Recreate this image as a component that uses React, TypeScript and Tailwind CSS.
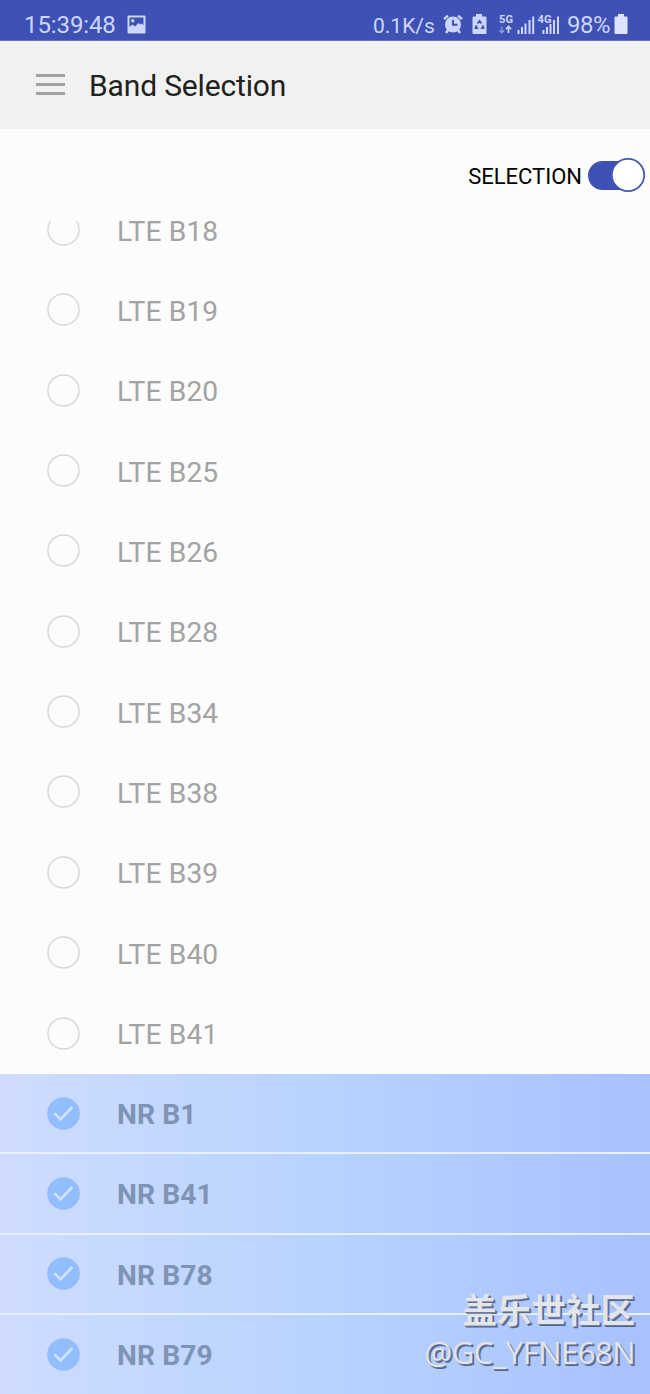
import React from 'react';

type Band = { name: string; checked?: boolean };

const bands: Band[] = [
  { name: 'LTE B18' },
  { name: 'LTE B19' },
  { name: 'LTE B20' },
  { name: 'LTE B25' },
  { name: 'LTE B26' },
  { name: 'LTE B28' },
  { name: 'LTE B34' },
  { name: 'LTE B38' },
  { name: 'LTE B39' },
  { name: 'LTE B40' },
  { name: 'LTE B41' },
  { name: 'NR B1', checked: true },
  { name: 'NR B41', checked: true },
  { name: 'NR B78', checked: true },
  { name: 'NR B79', checked: true },
];

function PictureIcon() {
  return (
    <svg className="ml-[11px] mt-[15px] h-[19px] w-[19px]" viewBox="0 0 19 19">
      <path
        fillRule="evenodd"
        fill="#ccd6ff"
        d="M1.5 0.5h16a1 1 0 0 1 1 1v16a1 1 0 0 1-1 1h-16a1 1 0 0 1-1-1v-16a1 1 0 0 1 1-1zM2.500 2.500v9.500l3-2.500 2.500 2 3.500-3.500 2 1.500 1.500-1 1.500 2V2.500z"
      />
      <circle cx="5.800" cy="5.800" r="1.700" fill="#ccd6ff" />
    </svg>
  );
}

function AlarmIcon() {
  return (
    <svg className="ml-2 mt-[14px] h-5 w-5" viewBox="0 0 20 20" fill="none" stroke="#ccd6ff">
      <path d="M1 5.200 5 1.600M19 5.200 15 1.600" strokeWidth="2.400" />
      <path d="M5 16l-2 3M15 16l2 3" strokeWidth="2.400" />
      <circle cx="10" cy="10.500" r="8" fill="#ccd6ff" stroke="none" />
      <path d="M10 5.800v5h4.500" stroke="#3f51b5" strokeWidth="1.900" />
    </svg>
  );
}

function BatterySaverIcon() {
  return (
    <svg className="ml-[9px] mt-[14px] h-5 w-[15px]" viewBox="0 0 15 20">
      <path d="M4 0h6v2.500h3.500a1 1 0 0 1 1 1V19a1 1 0 0 1-1 1h-12a1 1 0 0 1-1-1V3.500a1 1 0 0 1 1-1H4z" fill="#ccd6ff" />
      <path
        d="M5.500 9.500 7.500 6.900l2 2.600M10.500 11.200l1 3H9M6.300 14.200H3.500l1-3"
        fill="none"
        stroke="#3f51b5"
        strokeWidth="1.700"
      />
    </svg>
  );
}

function SignalIcons() {
  return (
    <svg className="ml-3 mt-[14px] h-5 w-[62px]" viewBox="0 0 62 20" fill="#ccd6ff">
      <text x="0" y="9" fontSize="11" fontWeight="700" textLength="14" lengthAdjust="spacingAndGlyphs" fontFamily="Roboto">
        5G
      </text>
      <path d="M2.800 12.500v6M0.500 16.200l2.300 2.500 2.300-2.500" stroke="#8e9ce0" strokeWidth="1.300" fill="none" />
      <path d="M9.500 19v-6M6.900 15.200l2.600-2.700 2.600 2.700" stroke="#ccd6ff" strokeWidth="1.700" fill="none" />
      <path d="M18.500 16h2v4h-2zM22 13h2v7h-2zM25.500 9.500h2V20h-2zM29.500 6h2v14h-2zM33.200 2.500h2V20h-2z" />
      <text x="38.500" y="9" fontSize="11" fontWeight="700" textLength="14" lengthAdjust="spacingAndGlyphs" fontFamily="Roboto">
        4G
      </text>
      <path d="M43.500 16h2v4h-2zM47 13h2v7h-2zM50.500 10h2v10h-2zM54 6h2v14h-2zM58 2.500h2V20h-2z" />
    </svg>
  );
}

function StatusBar() {
  return (
    <div className="flex h-[41px] shrink-0 items-start border-b border-[#6470b8] bg-[#3f51b5] pl-6 text-[#ccd6ff]">
      <span className="mt-[11px] w-[92px] whitespace-nowrap text-[24px] leading-[29px] tracking-[-0.1px]">15:39:48</span>
      <PictureIcon />
      <span className="ml-auto mt-3 w-[62px] whitespace-nowrap text-[21px] leading-7">0.1K/s</span>
      <AlarmIcon />
      <BatterySaverIcon />
      <SignalIcons />
      <span className="ml-[6px] mt-[11px] w-[45px] whitespace-nowrap text-[24px] leading-[29px] tracking-[-0.5px]">98%</span>
      <svg className="ml-[2px] mr-[22px] mt-[14px] h-5 w-[14px]" viewBox="0 0 14 20">
        <path d="M4 0h6v2.500h2.500a1 1 0 0 1 1 1V19a1 1 0 0 1-1 1h-11a1 1 0 0 1-1-1V3.500a1 1 0 0 1 1-1H4z" fill="#dce2ff" />
      </svg>
    </div>
  );
}

function BandRow({ band }: { band: Band }) {
  if (band.checked) {
    return (
      <li className="flex h-[80.36px] items-center border-b-2 border-[#e6f0ff] bg-linear-to-r from-[#cfdcff] via-[#b8d3ff] to-[#a8c1ff] pl-[46.5px] last:h-[90px] last:pb-[10px]">
        <svg className="h-[33px] w-[33px]" viewBox="0 0 33 33">
          <circle cx="16.500" cy="16.500" r="16.300" fill="#92beff" />
          <path d="M7.500 16.300l6 6L25.500 9.800" fill="none" stroke="#d2e4ff" strokeWidth="2.600" />
        </svg>
        <span className="ml-[37.5px] mt-[4px] text-[28.2px] font-bold tracking-[0.08px] text-[#7f93b4]">{band.name}</span>
      </li>
    );
  }

  return (
    <li className="flex h-[80.36px] items-center pl-[46.5px]">
      <svg className="mb-[1.5px] h-[33px] w-[33px]" viewBox="0 0 33 33">
        <circle cx="16.500" cy="16.500" r="15.600" fill="none" stroke="#d8d8d8" strokeWidth="1.500" />
      </svg>
      <span className="ml-[37.5px] mt-[3px] text-[28.2px] tracking-[0.12px] text-[#a3a3a3]">{band.name}</span>
    </li>
  );
}

export default function App() {
  return (
    <div className="relative flex h-[1394px] w-[650px] flex-col overflow-hidden bg-[#fcfcfc] font-['Roboto',sans-serif]">
      <StatusBar />

      <header className="flex h-[88px] shrink-0 items-center bg-[#f1f1f1] pl-9">
        <div className="mb-[2px] flex w-[29px] flex-col gap-[6px]">
          <span className="h-[3px] bg-[#a3a3a3]" />
          <span className="h-[3px] bg-[#a3a3a3]" />
          <span className="h-[3px] bg-[#a3a3a3]" />
        </div>
        <h1 className="ml-6 mt-px text-[30px] tracking-[-0.15px] text-[#212121]">Band Selection</h1>
      </header>

      <div className="flex h-[92px] shrink-0 items-center justify-end pr-1">
        <span className="mt-[2px] text-[22px] text-black">SELECTION</span>
        <svg className="ml-[5px] h-9 w-[59px]" viewBox="0 0 59 36">
          <rect x="1" y="4" width="54" height="29" rx="14.500" fill="#3f51b5" />
          <circle cx="41" cy="18" r="16.200" fill="#fff" stroke="#4656b2" strokeWidth="1.800" />
        </svg>
      </div>

      <ul className="min-h-0 flex-1 overflow-hidden">
        {/* the list is scrolled part way through the first row */}
        <div className="-mt-[31px]">
          {bands.map((band) => (
            <BandRow key={band.name} band={band} />
          ))}
        </div>
      </ul>

      <div className="absolute bottom-[21px] right-[15px] flex flex-col items-end whitespace-nowrap text-[#e2e5ea] [text-shadow:1px_1px_0_#707c9c,2px_2px_0_#55648a]">
        <span className="font-['Noto_Sans_CJK_SC',sans-serif] text-[34.5px] font-bold leading-[46px]">盖乐世社区</span>
        <span className="font-['Open_Sans',sans-serif] text-[31px] leading-[42px] tracking-[-0.5px]">@GC_YFNE68N</span>
      </div>
    </div>
  );
}
